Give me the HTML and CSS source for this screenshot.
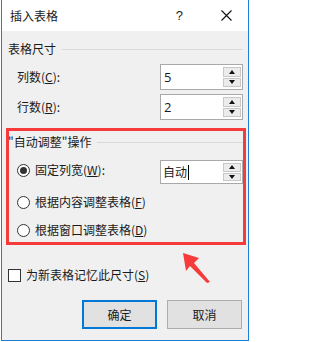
FILE: index.html
```html
<!DOCTYPE html>
<html lang="zh">
<head>
<meta charset="utf-8">
<link rel="stylesheet" href="styles.css">
</head>
<body>
<div class="dialog">
  <div class="titlebar">
    <span class="title">插入表格</span>
    <span class="help">?</span>
    <span class="close">
      <svg width="11" height="11" viewBox="0 0 11 11"><path d="M0.5 0.5L10.5 10.5M10.5 0.5L0.5 10.5" stroke="#111" stroke-width="1.1" fill="none"/></svg>
    </span>
  </div>
  <div class="body">
    <div class="group-title g1"><span>表格尺寸</span><i class="rule"></i></div>
    <div class="field f1">
      <span class="label">列数(<u>C</u>):</span>
      <div class="spin"><span class="val">5</span><div class="btns"><b class="up"></b><b class="down"></b></div></div>
    </div>
    <div class="field f2">
      <span class="label">行数(<u>R</u>):</span>
      <div class="spin"><span class="val">2</span><div class="btns"><b class="up"></b><b class="down"></b></div></div>
    </div>
    <div class="group-title g2"><span>"自动调整"操作</span><i class="rule"></i></div>
    <div class="radio-row r1">
      <span class="opt"><i class="radio on"></i>固定列宽(<u>W</u>):</span>
      <div class="spin short"><span class="val">自动<i class="caret"></i></span><div class="btns"><b class="up"></b><b class="down"></b></div></div>
    </div>
    <div class="radio-row r2"><span class="opt"><i class="radio"></i>根据内容调整表格(<u>F</u>)</span></div>
    <div class="radio-row r3"><span class="opt"><i class="radio"></i>根据窗口调整表格(<u>D</u>)</span></div>
    <div class="check-row"><i class="checkbox"></i>为新表格记忆此尺寸(<u>S</u>)</div>
    <div class="buttons">
      <button class="btn primary">确定</button>
      <button class="btn">取消</button>
    </div>
  </div>
</div>
<div class="highlight"></div>
<svg class="arrow" width="40" height="40" viewBox="0 0 40 40"><polygon points="1,0 17,5 12,10 28,29 25,30 8,13 4,18" fill="#f73b3b"/></svg>
</body>
</html>
```
FILE: styles.css
```css
html, body { margin: 0; padding: 0; }
body {
  width: 249px;
  height: 342px;
  background: #ffffff;
  font-family: "Noto Sans CJK SC", "Noto Sans", sans-serif;
  font-size: 12px;
  color: #1a1a1a;
  position: relative;
  overflow: hidden;
}
.dialog {
  margin-left: 1px;
  width: 248px;
  height: 341px;
  box-sizing: border-box;
  border: 1px solid #1b7fd6;
  border-top: none;
  background: #f0f0f0;
  display: flex;
  flex-direction: column;
}
.titlebar {
  height: 31px;
  background: #ffffff;
  display: flex;
  align-items: center;
  position: relative;
  flex: none;
}
.title { margin-left: 8px; font-size: 12px; line-height: 16px; }
.help { margin-left: auto; margin-right: 38px; font-family: "Liberation Sans", sans-serif; font-size: 13px; line-height: 16px; }
.close { margin-right: 16px; display: flex; }
.body {
  flex: 1;
  display: flex;
  flex-direction: column;
  padding: 0 5px 0 6px;
}
.group-title {
  height: 16px;
  line-height: 16px;
  display: flex;
  align-items: center;
  white-space: nowrap;
}
.g1 { margin-top: 10px; }
.g2 { margin-top: 14px; }
.rule { flex: 1; height: 1px; background: #d9d9d9; margin-left: 6px; margin-top: 1px; }
.field {
  height: 26px;
  display: flex;
  align-items: center;
  padding-left: 9px;
}
.f1 { margin-top: 7px; }
.f2 { margin-top: 4px; }
.label { line-height: 16px; }
u { text-decoration: underline; text-underline-offset: 1px; }
.spin {
  margin-left: auto;
  width: 83px;
  height: 26px;
  box-sizing: border-box;
  border: 1px solid #a9a9a9;
  background: #ffffff;
  display: flex;
  align-items: center;
}
.spin.short { height: 24px; align-self: flex-end; }
.val {
  flex: 1;
  padding-left: 3px;
  font-family: "Open Sans", "Noto Sans CJK SC", sans-serif;
  font-size: 13px;
  line-height: 16px;
  display: flex;
  align-items: center;
}
.short .val { font-family: "Noto Sans CJK SC", sans-serif; font-size: 12px; padding-left: 2px; }
.caret { display: inline-block; width: 1px; height: 15px; background: #000; margin-left: 1px; }
.btns {
  width: 18px;
  height: calc(100% - 4px);
  margin-right: 1px;
  display: flex;
  flex-direction: column;
  gap: 1px;
}
.btns b {
  flex: 1;
  box-sizing: border-box;
  border: 1px solid #c8c8c8;
  background: #ececec;
  position: relative;
}
.btns b::after {
  content: "";
  position: absolute;
  left: 50%;
  top: 50%;
  margin-left: -3px;
  border-left: 3px solid transparent;
  border-right: 3px solid transparent;
}
.up::after { margin-top: -2px; border-bottom: 4px solid #111; }
.down::after { margin-top: -2px; border-top: 4px solid #111; }
.radio-row {
  display: flex;
  padding-left: 9px;
  height: 20px;
  align-items: center;
}
.r1 { margin-top: 8px; height: 26px; align-items: flex-start; }
.r1 .opt { height: 24px; }
.r2 { margin-top: 8px; }
.r3 { margin-top: 8px; }
.opt { display: flex; align-items: center; line-height: 16px; white-space: nowrap; }
.radio {
  width: 13px;
  height: 13px;
  box-sizing: border-box;
  border: 1px solid #333;
  border-radius: 50%;
  background: #fff;
  margin-right: 5px;
  display: flex;
  align-items: center;
  justify-content: center;
}
.radio.on::after {
  content: "";
  width: 7px;
  height: 7px;
  border-radius: 50%;
  background: #333;
}
.check-row {
  margin-top: 25px;
  height: 20px;
  display: flex;
  align-items: center;
  line-height: 16px;
  white-space: nowrap;
}
.checkbox {
  width: 13px;
  height: 13px;
  box-sizing: border-box;
  border: 1px solid #333;
  background: #fff;
  margin-right: 5px;
}
.buttons {
  margin-top: 15px;
  display: flex;
  justify-content: flex-end;
  gap: 10px;
  padding-right: 1px;
}
.btn {
  width: 75px;
  height: 29px;
  box-sizing: border-box;
  border: 1px solid #adadad;
  background: #e1e1e1;
  font-family: "Noto Sans CJK SC", sans-serif;
  font-size: 12px;
  color: #1a1a1a;
  padding: 0;
  line-height: 16px;
}
.btn.primary { border: 2px solid #0078d7; }
.highlight {
  position: absolute;
  left: 6px;
  top: 128px;
  width: 240px;
  height: 117px;
  box-sizing: border-box;
  border: 3px solid #f73b3b;
}
.arrow { position: absolute; left: 182px; top: 253px; }
```
